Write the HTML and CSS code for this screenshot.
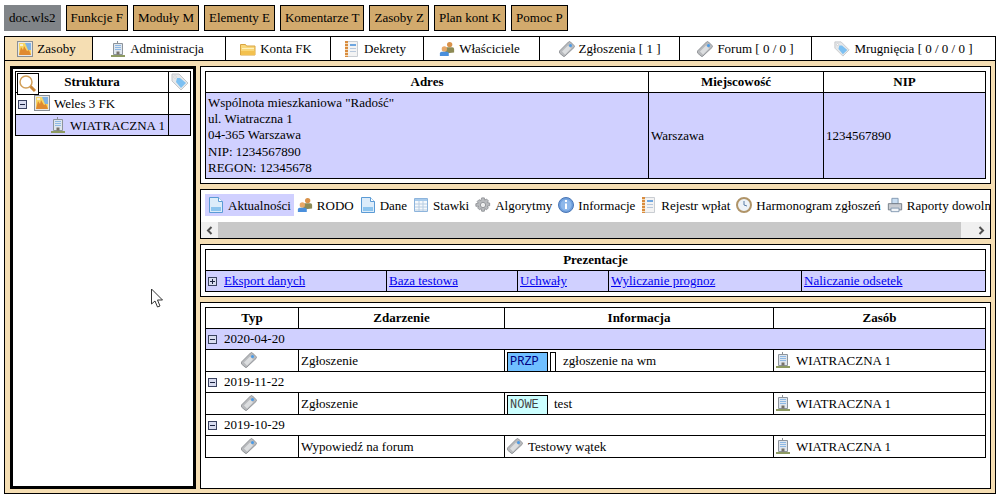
FILE: index.html
```html
<!DOCTYPE html>
<html lang="pl">
<head>
    <meta charset="UTF-8">
    <title>doc.wls2</title>
    <link rel="stylesheet" href="styles.css">
</head>
<body>

    <svg class="sprites" width="0" height="0">
        <defs>
            <symbol id="i-zasoby" viewBox="0 0 16 16">
                <rect x="0.5" y="0.5" width="15" height="15" fill="#e8e8e8" stroke="#8a8f94"/>
                <rect x="2" y="2" width="12" height="12" fill="#f8d764"/>
                <path d="M8 2h6v7h-3z" fill="#7fb2e4"/>
                <path d="M2 14l2-8 2 3 1-4 3 5 2-1 2 5z" fill="#e08a30"/>
                <path d="M3 3h3v2H3z" fill="#f6eed8"/>
            </symbol>
            <symbol id="i-building" viewBox="0 0 16 16">
                <path d="M7 0h1v2H7z" fill="#8a8f94"/>
                <path d="M3.500 2.500h9v11h-9z" fill="#dfe6ee" stroke="#8d949c"/>
                <path d="M5 4h6v1H5zM5 6h6v1H5zM5 8h6v1H5z" fill="#8db8e4"/>
                <path d="M6.500 10.500h3v3h-3z" fill="#77736a"/>
                <path d="M1 14h14v2H1z" fill="#8d9a62"/>
            </symbol>
            <symbol id="i-folder" viewBox="0 0 16 16">
                <path d="M0.500 3.500h5l1 1.500h8.500v9h-14.500z" fill="#f9d778" stroke="#d9a441"/>
                <path d="M2 7h12v1H2z" fill="#fff1bd"/>
                <path d="M1 10h14v4H1z" fill="#f3c14f"/>
            </symbol>
            <symbol id="i-notes" viewBox="0 0 16 16">
                <path d="M3.500 0.500h10v15h-10z" fill="#f3f3f3" stroke="#c9cdd2"/>
                <path d="M1 0h3v16H1z" fill="#d98c3f"/>
                <path d="M1 2h3v1H1zM1 5h3v1H1zM1 8h3v1H1zM1 11h3v1H1zM1 14h3v1H1z" fill="#f5dcb8"/>
                <path d="M6 3h6v2H6z" fill="#6ea6e0"/>
                <path d="M6 7h6v1H6zM6 10h6v1H6z" fill="#b8c8dc"/>
            </symbol>
            <symbol id="i-people" viewBox="0 0 18 18">
                <circle cx="12" cy="4" r="3" fill="#d9924a"/>
                <path d="M7 14V9q0-2 2-2h6q2 0 2 2v4z" fill="#8d8a55"/>
                <circle cx="6" cy="9" r="3" fill="#e8a868"/>
                <path d="M1 17v-3q0-2 2-2h6q2 0 2 2v3z" fill="#4a8fdc"/>
            </symbol>
            <symbol id="i-ticket" viewBox="0 0 16 16">
                <path d="M0.500 10L9.500 1q1-1 2 0l3.500 3.500q1 1 0 2L6 15q-1 1-2 0L0.500 12q-.500-1 0-2z" fill="#b8babd" stroke="#929599"/>
                <path d="M3 10.500l6-6 3 3-6 6z" fill="#dcdee0"/>
                <circle cx="11.500" cy="4.500" r="1.500" fill="#4a9be8"/>
            </symbol>
            <symbol id="i-tag" viewBox="0 0 18 18">
                <path d="M1 1h7l9 9-7 7-9-9z" fill="#e6e8ea" stroke="#c3c6c9"/>
                <path d="M6 5h3l6 5-5 5-5-6z" fill="#7cc0f2"/>
                <circle cx="4" cy="4" r="1.200" fill="#fff" stroke="#b4b6b9" stroke-width="0.500"/>
            </symbol>
            <symbol id="i-doc" viewBox="0 0 16 16">
                <path d="M1.500 0.500h9l4 4v11h-13z" fill="#dcecfa" stroke="#5b9bd5"/>
                <path d="M10.500 0.500v4h4" fill="#fff" stroke="#5b9bd5"/>
                <path d="M3 10h10v4H3z" fill="#8cc4ee"/>
            </symbol>
            <symbol id="i-table" viewBox="0 0 16 16">
                <path d="M1.500 1.500h13v13h-13z" fill="#f6f9fc" stroke="#8db4dc"/>
                <path d="M2 2h12v2H2z" fill="#a8cbec"/>
                <path d="M2 7h12M2 10h12M2 13h12M6 4v10M10 4v10" stroke="#b8cde2" fill="none"/>
            </symbol>
            <symbol id="i-gear" viewBox="0 0 18 18">
                <path d="M7.500 1h3l.5 2.500 2-1.200 2 2-1.200 2 2.700.500v3l-2.700.500 1.200 2-2 2-2-1.200-.500 2.900h-3l-.500-2.900-2 1.200-2-2 1.200-2L1 10.500v-3l2.700-.500-1.200-2 2-2 2 1.200z" fill="#b9bbbe" stroke="#8f9296"/>
                <circle cx="9" cy="9" r="3" fill="#eceded" stroke="#8f9296"/>
            </symbol>
            <symbol id="i-info" viewBox="0 0 16 16">
                <circle cx="8" cy="8" r="7.500" fill="#6f9fdc" stroke="#4a76b4"/>
                <circle cx="8" cy="8" r="5.500" fill="#8eb8ea"/>
                <path d="M7 3h2v2H7zM7 6.500h2V12H7z" fill="#fff"/>
            </symbol>
            <symbol id="i-clock" viewBox="0 0 16 16">
                <circle cx="8" cy="8" r="7" fill="#eef3f8" stroke="#b09468" stroke-width="2"/>
                <path d="M8 4v4l3 1" fill="none" stroke="#5b7ea8"/>
            </symbol>
            <symbol id="i-print" viewBox="0 0 18 18">
                <path d="M5.500 1.500h7v6h-7z" fill="#c9def2" stroke="#7c94ad"/>
                <path d="M1.500 7.500h15v7h-15z" fill="#c8ccd2" stroke="#6f7680"/>
                <path d="M4.500 12.500h9v4h-9z" fill="#f2f5f8" stroke="#7c94ad"/>
            </symbol>
            <symbol id="i-loupe" viewBox="0 0 20 20">
                <circle cx="8" cy="8" r="6" fill="#fff" stroke="#d2a05a" stroke-width="1.500"/>
                <path d="M12.500 12.500l4.500 4.500" stroke="#c98638" stroke-width="3"/>
            </symbol>
            <symbol id="i-minus" viewBox="0 0 9 9">
                <rect x="0.500" y="0.500" width="8" height="8" fill="#d8dcef" stroke="#39415f"/>
                <path d="M2 4.500h5" stroke="#1c2340"/>
            </symbol>
            <symbol id="i-plus" viewBox="0 0 9 9">
                <rect x="0.500" y="0.500" width="8" height="8" fill="#d8dcef" stroke="#39415f"/>
                <path d="M2 4.500h5M4.500 2v5" stroke="#1c2340"/>
            </symbol>
        </defs>
    </svg>

    <div class="top-buttons">
        <span class="doc-name">doc.wls2</span>
        <span class="top-btn">Funkcje F</span>
        <span class="top-btn">Moduły M</span>
        <span class="top-btn">Elementy E</span>
        <span class="top-btn">Komentarze T</span>
        <span class="top-btn">Zasoby Z</span>
        <span class="top-btn">Plan kont K</span>
        <span class="top-btn">Pomoc P</span>
    </div>

    <div class="tabs">
        <div class="tab tab-left active"><svg class="ico"><use href="#i-zasoby"/></svg>Zasoby</div>
        <div class="tab tab-left"><svg class="ico"><use href="#i-building"/></svg>Administracja</div>
        <div class="tab tab-left"><svg class="ico"><use href="#i-folder"/></svg>Konta FK</div>
        <div class="tab tab-left"><svg class="ico"><use href="#i-notes"/></svg>Dekrety</div>
        <div class="tab tab-left"><svg class="ico"><use href="#i-people"/></svg>Właściciele</div>
        <div class="tab"><svg class="ico"><use href="#i-ticket"/></svg>Zgłoszenia [ 1 ]</div>
        <div class="tab"><svg class="ico"><use href="#i-ticket"/></svg>Forum [ 0 / 0 ]</div>
        <div class="tab"><svg class="ico"><use href="#i-tag"/></svg>Mrugnięcia [ 0 / 0 / 0 ]</div>
    </div>

    <div class="main">
        <div class="tree-panel">
            <table class="grid tree">
                <colgroup><col><col class="tree-tag-col"></colgroup>
                <tr class="row-head">
                    <th>Struktura</th>
                    <td class="center"><svg class="tag-ico"><use href="#i-tag"/></svg></td>
                </tr>
                <tr class="row-tall">
                    <td><svg class="box"><use href="#i-minus"/></svg><svg class="ico"><use href="#i-zasoby"/></svg>Weles 3 FK</td>
                    <td></td>
                </tr>
                <tr class="row-std selected">
                    <td class="tree-child"><svg class="ico"><use href="#i-building"/></svg>WIATRACZNA 1</td>
                    <td></td>
                </tr>
            </table>
            <div class="search-box"><svg class="loupe"><use href="#i-loupe"/></svg></div>
        </div>

        <div class="content">
            <div class="panel">
                <table class="grid">
                    <colgroup><col><col class="addr-city"><col class="addr-nip"></colgroup>
                    <tr class="row-head">
                        <th>Adres</th>
                        <th>Miejscowość</th>
                        <th>NIP</th>
                    </tr>
                    <tr class="selected">
                        <td class="address">Wspólnota mieszkaniowa "Radość"<br>ul. Wiatraczna 1<br>04-365 Warszawa<br>NIP: 1234567890<br>REGON: 12345678</td>
                        <td>Warszawa</td>
                        <td>1234567890</td>
                    </tr>
                </table>
            </div>

            <div class="panel panel-modules">
                <div class="modules">
                    <span class="module active"><svg class="ico"><use href="#i-doc"/></svg>Aktualności</span>
                    <span class="module"><svg class="ico"><use href="#i-people"/></svg>RODO</span>
                    <span class="module"><svg class="ico"><use href="#i-doc"/></svg>Dane</span>
                    <span class="module"><svg class="ico"><use href="#i-table"/></svg>Stawki</span>
                    <span class="module"><svg class="ico"><use href="#i-gear"/></svg>Algorytmy</span>
                    <span class="module"><svg class="ico"><use href="#i-info"/></svg>Informacje</span>
                    <span class="module"><svg class="ico"><use href="#i-notes"/></svg>Rejestr wpłat</span>
                    <span class="module"><svg class="ico"><use href="#i-clock"/></svg>Harmonogram zgłoszeń</span>
                    <span class="module"><svg class="ico"><use href="#i-print"/></svg>Raporty dowolne</span>
                </div>
                <div class="scrollbar">
                    <span class="scroll-btn"><svg width="7" height="9" viewBox="0 0 7 9"><path d="M5.500 1L2 4.500 5.500 8" fill="none" stroke="#505050" stroke-width="2"/></svg></span>
                    <span class="scroll-track"></span>
                    <span class="scroll-btn scroll-btn-end"><svg width="7" height="9" viewBox="0 0 7 9"><path d="M1.500 1L5 4.500 1.500 8" fill="none" stroke="#505050" stroke-width="2"/></svg></span>
                </div>
            </div>

            <div class="panel">
                <table class="grid">
                    <colgroup><col class="pres-1"><col class="pres-2"><col class="pres-3"><col class="pres-4"><col></colgroup>
                    <tr class="row-head"><th colspan="5">Prezentacje</th></tr>
                    <tr class="selected row-std">
                        <td><svg class="box"><use href="#i-plus"/></svg><a href="#">Eksport danych</a></td>
                        <td><a href="#">Baza testowa</a></td>
                        <td><a href="#">Uchwały</a></td>
                        <td><a href="#">Wyliczanie prognoz</a></td>
                        <td><a href="#">Naliczanie odsetek</a></td>
                    </tr>
                </table>
            </div>

            <div class="panel panel-events">
                <table class="grid">
                    <colgroup><col class="ev-type"><col class="ev-name"><col class="ev-info"><col></colgroup>
                    <tr class="row-head">
                        <th>Typ</th>
                        <th>Zdarzenie</th>
                        <th>Informacja</th>
                        <th>Zasób</th>
                    </tr>
                    <tr class="selected row-std">
                        <td colspan="4"><svg class="box"><use href="#i-minus"/></svg>2020-04-20</td>
                    </tr>
                    <tr class="row-tall">
                        <td class="center type-cell"><svg class="ico"><use href="#i-ticket"/></svg></td>
                        <td>Zgłoszenie</td>
                        <td class="info-cell">
                            <div class="info-wrap">
                                <span class="status przp">PRZP</span>
                                <span class="status-gap"></span>
                                <span class="info-text info-text-far">zgłoszenie na wm</span>
                            </div>
                        </td>
                        <td><svg class="ico res-ico"><use href="#i-building"/></svg>WIATRACZNA 1</td>
                    </tr>
                    <tr class="row-std">
                        <td colspan="4"><svg class="box"><use href="#i-minus"/></svg>2019-11-22</td>
                    </tr>
                    <tr class="row-tall">
                        <td class="center type-cell"><svg class="ico"><use href="#i-ticket"/></svg></td>
                        <td>Zgłoszenie</td>
                        <td class="info-cell">
                            <div class="info-wrap">
                                <span class="status nowe">NOWE</span>
                                <span class="info-text">test</span>
                            </div>
                        </td>
                        <td><svg class="ico res-ico"><use href="#i-building"/></svg>WIATRACZNA 1</td>
                    </tr>
                    <tr class="row-std">
                        <td colspan="4"><svg class="box"><use href="#i-minus"/></svg>2019-10-29</td>
                    </tr>
                    <tr class="row-tall">
                        <td class="center type-cell"><svg class="ico"><use href="#i-ticket"/></svg></td>
                        <td>Wypowiedź na forum</td>
                        <td><svg class="ico thread-ico"><use href="#i-ticket"/></svg>Testowy wątek</td>
                        <td><svg class="ico res-ico"><use href="#i-building"/></svg>WIATRACZNA 1</td>
                    </tr>
                </table>
            </div>
        </div>
    </div>

    <svg class="cursor" width="14" height="21" viewBox="0 0 14 21"><path d="M1.500 1v15l3.500-3 2.500 6 2.500-1-2.500-6h5z" fill="#fff" stroke="#333"/></svg>

</body>
</html>
```

FILE: styles.css
```css
html, body {
    margin: 0;
    height: 100%;
    overflow: hidden;
}

body {
    font-family: "Liberation Serif", "Times New Roman", serif;
    font-size: 13px;
    color: #000;
    background-color: white;
    padding: 5px 4px 0 4px;
    box-sizing: border-box;
    position: relative;
}

.sprites {
    position: absolute;
}

.ico {
    width: 16px;
    height: 16px;
    vertical-align: -3px;
    margin-right: 4px;
}

.box {
    width: 9px;
    height: 9px;
    vertical-align: -1px;
    margin-right: 7px;
}

.top-buttons {
    display: flex;
    gap: 5px;
    height: 26px;
    margin-bottom: 5px;
}

.doc-name,
.top-btn {
    display: flex;
    align-items: center;
    padding: 0 4px;
}

.doc-name {
    background-color: #808488;
    padding: 0 5px;
}

.top-btn {
    background-color: #d2aa6d;
    border: 1px solid black;
}

.tabs {
    display: grid;
    grid-template-columns: 88px 133px 105px 93px 116px 140px 132px 1fr;
    border: 1px solid black;
    height: 23px;
}

.tab {
    display: flex;
    align-items: center;
    justify-content: center;
    border-right: 1px solid black;
}

.tab:last-child {
    border-right: none;
}

.tab-left {
    padding-right: 4px;
}

.tab.active {
    background-color: #f5deb3;
}

.main {
    display: grid;
    grid-template-columns: 186px minmax(0, 1fr);
    gap: 4px;
    height: 433px;
    padding: 5px 4px 4px 5px;
    box-sizing: border-box;
    background-color: #f5deb3;
    border: 1px solid black;
    border-top: none;
}

.tree-panel {
    position: relative;
    background-color: white;
    border: 3px solid black;
    padding: 2px;
}

.content {
    display: flex;
    flex-direction: column;
    gap: 5px;
    min-width: 0;
}

.panel {
    background-color: white;
    border: 1px solid black;
    padding: 4px;
}

.panel-modules {
    padding: 4px 0 0 0;
}

.panel-events {
    flex: 1;
}

.grid {
    width: 100%;
    table-layout: fixed;
    border-collapse: collapse;
    border: 1px solid black;
}

.grid th,
.grid td {
    border: 1px solid black;
    padding: 0 2px;
    text-align: left;
    white-space: nowrap;
    overflow: hidden;
}

.grid th {
    text-align: center;
}

.grid td.center {
    text-align: center;
}

.grid td.center .ico {
    margin-right: 0;
}

.row-head,
.row-std {
    height: 21px;
}

.row-tall {
    height: 22px;
}

.selected {
    background-color: #d0d0ff;
}

.grid td.address {
    line-height: 16.2px;
    padding: 2px;
}

.addr-city {
    width: 175px;
}

.addr-nip {
    width: 162px;
}

.tree-tag-col {
    width: 22px;
}

.tag-ico {
    width: 18px;
    height: 18px;
    vertical-align: -4px;
}

.grid td.tree-child {
    padding-left: 34px;
}

.search-box {
    position: absolute;
    left: 4px;
    top: 4px;
    width: 20px;
    height: 20px;
    background-color: white;
    border: 1px solid black;
}

.loupe {
    width: 20px;
    height: 20px;
}

.modules {
    display: flex;
    align-items: center;
    height: 22px;
    margin-left: 4px;
    overflow: hidden;
    white-space: nowrap;
}

.module {
    flex: none;
    padding: 3px;
}

.module.active {
    background-color: #d0d0ff;
}

.scrollbar {
    display: flex;
    height: 16px;
    margin-top: 6px;
}

.scroll-btn {
    display: flex;
    align-items: center;
    justify-content: center;
    width: 17px;
    background-color: #f0f0f0;
}

.scroll-btn-end {
    width: 29px;
    padding-left: 12px;
    box-sizing: border-box;
}

.scroll-track {
    flex: 1;
    background-color: #c8c8c8;
}

.pres-1 {
    width: 181px;
}

.pres-2 {
    width: 131px;
}

.pres-3 {
    width: 91px;
}

.pres-4 {
    width: 193px;
}

a {
    color: #0000ee;
}

.ev-type {
    width: 93px;
}

.ev-name {
    width: 206px;
}

.ev-info {
    width: 269px;
}

.grid td.type-cell {
    padding-right: 8px;
}

.res-ico {
    margin-left: -1px;
    margin-right: 5px;
}

.thread-ico {
    margin-right: 5px;
}

.grid td.info-cell {
    padding: 0 0 0 2px;
    height: 21px;
}

.info-wrap {
    display: flex;
    align-items: center;
    height: 21px;
}

.status {
    flex: none;
    align-self: flex-end;
    box-sizing: border-box;
    width: 41px;
    height: 19px;
    line-height: 18px;
    padding-left: 2px;
    border: 1px solid black;
    border-bottom: none;
    font-family: "Liberation Mono", monospace;
    font-size: 12px;
}

.przp {
    background-color: #70bfff;
    color: #000080;
}

.nowe {
    background-color: #ccffff;
    color: #444;
}

.status-gap {
    flex: none;
    align-self: flex-end;
    box-sizing: border-box;
    width: 6px;
    height: 19px;
    margin-left: 2px;
    border: 1px solid black;
    border-bottom: none;
}

.info-text {
    margin-left: 6px;
}

.info-text-far {
    margin-left: 7px;
}

.cursor {
    position: absolute;
    left: 150px;
    top: 288px;
}
```
